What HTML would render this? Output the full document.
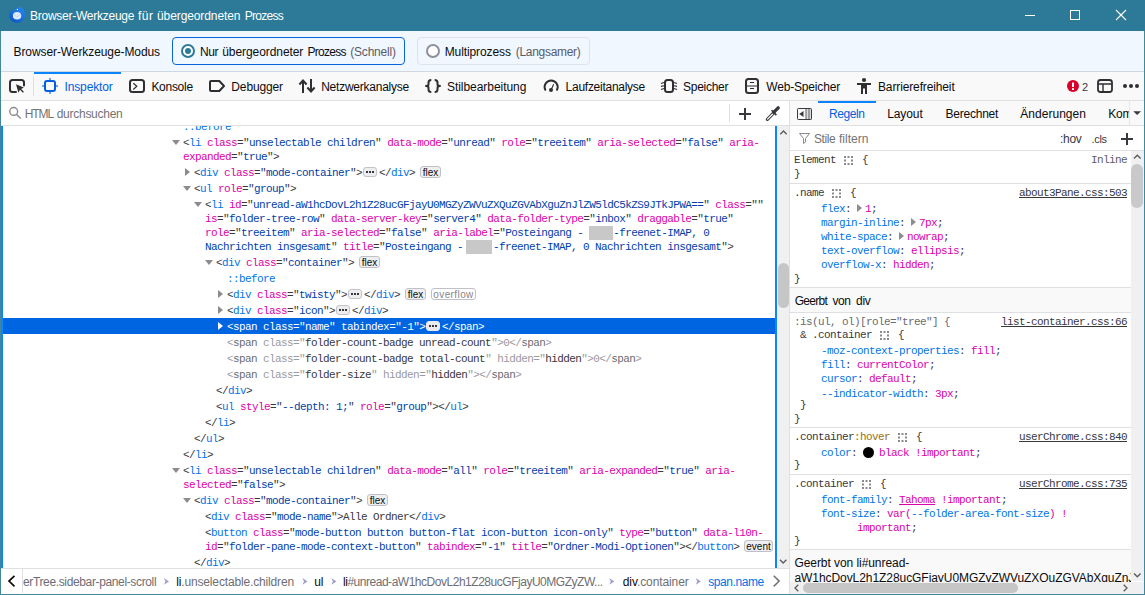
<!DOCTYPE html>
<html lang="de">
<head>
<meta charset="utf-8">
<title>Browser-Werkzeuge für übergeordneten Prozess</title>
<style>
html,body{margin:0;padding:0;}
body{width:1145px;height:595px;overflow:hidden;background:#fff;font-family:"Liberation Sans",sans-serif;font-size:12px;color:#0c0c0d;position:relative;}
#win{position:absolute;left:0;top:0;width:1145px;height:595px;overflow:hidden;}
.abs{position:absolute;}
.t{position:absolute;white-space:pre;line-height:16px;font-family:"Liberation Sans",sans-serif;}
.m{position:absolute;white-space:pre;font-family:"Liberation Mono",monospace;font-size:11px;letter-spacing:-0.6px;line-height:14px;color:#38383d;}
.tg{color:#0074e8}
.an{color:#dd00a9}
.av{color:#003eaa}
.ps{color:#0074e8}
.hid, .hid .an{color:#9a9a9e}
.hid .tg{color:#6c6c70}
.hid .av{color:#38383d}
.sel, .sel .tg, .sel .an, .sel .av{color:#fff}
.pn{color:#0074e8}
.pv{color:#dd00a9}
.lnk{color:#38383d;text-decoration:underline;}
.badge{position:absolute;height:10px;border:1px solid #c0c0c8;border-radius:3px;background:#efeff2;color:#0c0c0d;font-family:"Liberation Sans",sans-serif;font-size:10px;line-height:11.5px;text-align:center;white-space:pre;}
.tw{position:absolute;width:0;height:0;}
.tw.c{border-left:5px solid #8c8c90;border-top:4px solid transparent;border-bottom:4px solid transparent;}
.tw.e{border-top:5px solid #8c8c90;border-left:4px solid transparent;border-right:4px solid transparent;}
.tw.c.s{border-left-color:#fff}
.tw.e.s{border-top-color:#fff}
.rd{display:inline-block;height:14px;background:#c8c8c8;vertical-align:top;}
.eb{position:absolute;width:11.5px;height:8px;border:1px solid #c3c3c9;border-radius:3px;background:#ededf0;}
.eb.s{background:#e9e9ee;border-color:#e9e9ee}
.eb i{position:absolute;top:3px;width:2px;height:2px;background:#38383d;}
.eb i:nth-child(1){left:2px}.eb i:nth-child(2){left:5px}.eb i:nth-child(3){left:8px}
.badge.off{background:#fff;color:#85858c;letter-spacing:0.4px;}
.inl{color:#5c5c63}
.anc{color:#6a6a70}
.pc{color:#967014}
.pv .pn{color:#0074e8}
.hl{position:absolute;left:0;width:1145px;height:1px;background:#e0e0e2;}
svg{position:absolute;overflow:visible;}
</style>
</head>
<body>
<div id="win">

<!-- title bar -->
<div class="abs" style="left:0;top:0;width:1145px;height:31px;background:#2c7a98;"></div>
<!-- window controls -->
<div class="abs" style="left:1025px;top:15px;width:10px;height:1px;background:#fff;"></div>
<div class="abs" style="left:1070px;top:10px;width:8px;height:8px;border:1px solid #fff;"></div>
<svg style="left:1116px;top:10px" width="10" height="10" viewBox="0 0 10 10"><path d="M0 0L10 10M10 0L0 10" stroke="#fff" stroke-width="1.1" fill="none"/></svg>
<!-- app icon -->
<svg style="left:0;top:0" width="40" height="31" viewBox="0 0 40 31">
<defs><linearGradient id="tbg" x1="0.85" y1="0.05" x2="0.2" y2="0.95"><stop offset="0" stop-color="#2483ee"/><stop offset="0.55" stop-color="#176ddc"/><stop offset="1" stop-color="#0f55c4"/></linearGradient></defs>
<path d="M12.400 9.200C10.500 11 9 13.500 9.300 16.200C9.800 20 13 22.800 17 22.800C21.500 22.800 25 19.500 25 15C25 11.500 23.600 8.600 20.600 7.300C18.400 7.200 16 8 14.600 10C13.900 11 13.400 12 13.300 13.200C12.600 12 12.300 10.500 12.400 9.200Z" fill="url(#tbg)"/>
<ellipse cx="17.100" cy="15.800" rx="4.200" ry="3.800" fill="#dcebfb"/>
<path d="M13.400 14.200L17.100 17L20.800 14.200" stroke="#b7d0ee" stroke-width="0.800" fill="none"/>
<circle cx="17.400" cy="9.500" r="0.650" fill="#fff"/>
</svg>
<!-- mode bar -->
<div class="abs" style="left:1px;top:31px;width:1143px;height:40px;background:#f0f7ff;"></div>
<div class="abs" style="left:1px;top:71px;width:1143px;height:1px;background:#cfd8e0;"></div>
<div class="abs" style="left:172px;top:37px;width:231px;height:26px;border:1px solid #0a62e0;border-radius:4px;"></div>
<div class="abs" style="left:417px;top:37px;width:171px;height:26px;border:1px solid #dde3e9;border-radius:4px;"></div>
<!-- radios -->
<div class="abs" style="left:181px;top:44px;width:10px;height:10px;border:2px solid #2c7a98;border-radius:50%;background:#fff;"></div>
<div class="abs" style="left:185px;top:48px;width:6px;height:6px;border-radius:50%;background:#2c7a98;"></div>
<div class="abs" style="left:426px;top:44px;width:10px;height:10px;border:2px solid #8f8f9d;border-radius:50%;background:#fff;"></div>
<!-- toolbar -->
<div class="abs" style="left:1px;top:72px;width:1143px;height:28px;background:#f9f9fa;"></div>
<div class="abs" style="left:1px;top:100px;width:1143px;height:1px;background:#e0e0e2;"></div>
<div class="abs" style="left:34px;top:72px;width:87px;height:2px;background:#0a84ff;"></div>
<div class="abs" style="left:33px;top:76px;width:1px;height:20px;background:#e0e0e2;"></div>
<!-- search bar / sidebar tabs row -->
<div class="abs" style="left:1px;top:101px;width:788px;height:24px;background:#fff;"></div>
<div class="abs" style="left:790px;top:101px;width:354px;height:24px;background:#f9f9fa;"></div>
<div class="abs" style="left:1px;top:125px;width:1143px;height:1px;background:#e0e0e2;"></div>
<div class="abs" style="left:729px;top:104px;width:1px;height:18px;background:#e0e0e2;"></div>
<div class="abs" style="left:818px;top:101px;width:58px;height:2px;background:#0a84ff;"></div>
<!-- splitter -->
<div class="abs" style="left:789px;top:101px;width:1px;height:493px;background:#e0e0e2;"></div>
<!-- markup bg -->
<div class="abs" style="left:1px;top:126px;width:776px;height:442px;background:#fff;"></div>
<!-- markup scrollbar -->
<div class="abs" style="left:777px;top:126px;width:12px;height:442px;background:#f0f0f0;"></div>
<div class="abs" style="left:778px;top:263px;width:11px;height:45px;border-radius:5.5px;background:#c6c6c6;"></div>
<!-- breadcrumbs -->
<div class="abs" style="left:1px;top:568px;width:788px;height:1px;background:#e0e0e2;"></div>
<div class="abs" style="left:1px;top:569px;width:788px;height:25px;background:#fff;"></div>
<div class="abs" style="left:22px;top:569px;width:1px;height:24px;background:#e0e0e2;"></div>
<!-- right: filter bar -->
<div class="abs" style="left:790px;top:126px;width:354px;height:24px;background:#fff;"></div>
<div class="abs" style="left:790px;top:150px;width:354px;height:1px;background:#e0e0e2;"></div>
<!-- right scrollbar -->
<div class="abs" style="left:1131px;top:151px;width:13px;height:430px;background:#f0f0f0;"></div>
<div class="abs" style="left:1131px;top:164px;width:12px;height:44px;border-radius:6px;background:#c9c9c9;"></div>

<!-- icons -->
<svg style="left:0;top:0" width="1145" height="595" viewBox="0 0 1145 595" fill="none" stroke-linecap="butt">
<g stroke="#2f2f33" stroke-width="2" stroke-linejoin="round">
<!-- pick element -->
<path d="M16 92H12.5Q10 92 10 89.500V82.500Q10 80 12.500 80H21.500Q24 80 24 82.500V85.500" stroke-linecap="round"/>
<path d="M16 84.200L18.400 92.800L20 89.800L22.900 92.800L23.900 91.800L21.200 88.900L23.800 87.600Z" fill="#2f2f33" stroke="none"/>
<!-- console -->
<rect x="130" y="80" width="14" height="12" rx="2.500"/>
<path d="M133.300 83.300L136.800 86.300L133.300 89.500" stroke-width="1.200"/>
<!-- debugger -->
<path d="M210 82Q210 81 211 81H219.300L224 86L219.300 91H211Q210 91 210 90Z"/>
<!-- network -->
<path d="M303 93V80.500M299.400 84.500L303 80.500L306.600 84.500M311 79V91.500M307.400 87.500L311 91.500L314.600 87.500" stroke-linejoin="miter"/>
<!-- style editor -->
<path d="M431.300 80Q428.500 80 428.500 82.500V84.300Q428.500 86 426 86Q428.500 86 428.500 87.700V89.500Q428.500 92 431.300 92M434.700 80Q437.500 80 437.500 82.500V84.300Q437.500 86 440 86Q437.500 86 437.500 87.700V89.500Q437.500 92 434.700 92"/>
<!-- performance -->
<path d="M545.300 89.800A6.500 6.500 0 1 1 557 89.800" stroke-linecap="round"/>
<circle cx="551" cy="90" r="2" fill="#2f2f33" stroke="none"/>
<path d="M551 90L553.700 84.200" stroke-width="1.100"/>
<!-- memory -->
<rect x="665" y="80" width="8" height="12" rx="2.500"/>
<path d="M661 83.600L664 82.600M661 86.400L664 85.800M661 89.600L664 88.600M677 83.600L674 82.600M677 86.400L674 85.800M677 89.600L674 88.600" stroke-width="1.100"/>
<!-- storage -->
<rect x="746" y="79" width="12" height="14" rx="2.500"/>
<path d="M746 86H758M750 82.500H754M750 88.500H754" stroke-width="1.100"/>
<!-- dock -->
<rect x="1098" y="80" width="14" height="12" rx="2.500" stroke-width="1.800"/>
<path d="M1098 84H1112M1103 84V92" stroke-width="1.400"/>
</g>
<!-- accessibility -->
<g fill="#2f2f33">
<circle cx="864" cy="80" r="2.100"/>
<path d="M857 83H871V85H867V94H865V88.500H863V94H861V85H857Z"/>
<!-- meatball -->
<circle cx="1125" cy="86" r="2"/><circle cx="1131" cy="86" r="2"/><circle cx="1137" cy="86" r="2"/>
</g>
<!-- inspector (active) -->
<rect x="45" y="81" width="10" height="10" rx="2" stroke="#0060df" stroke-width="2"/>
<path d="M50 78V80M50 92V94M42 86H44M56 86H58" stroke="#0060df" stroke-opacity="0.550" stroke-width="2"/>
<!-- error badge -->
<circle cx="1073" cy="86" r="6" fill="#d7002b"/>
<rect x="1072" y="82.500" width="2" height="4.500" rx="0.600" fill="#fff"/>
<rect x="1072" y="88" width="2" height="2" rx="0.600" fill="#fff"/>
<!-- search magnifier -->
<circle cx="13.700" cy="111.400" r="3.900" stroke="#8a8a8f" stroke-width="1.400"/>
<path d="M16.500 114.500L20.800 118.600" stroke="#8a8a8f" stroke-width="1.400"/>
<!-- plus (new node) -->
<path d="M739 114H751M745 108V120" stroke="#38383d" stroke-width="2"/>
<!-- eyedropper -->
<path d="M767.400 119.300L774 112.700" stroke="#38383d" stroke-width="3.200" stroke-linecap="round"/>
<path d="M767.600 119.100L774.200 112.500" stroke="#fff" stroke-width="1.300" stroke-linecap="round"/>
<path d="M773.600 112.400L778.200 107.900" stroke="#38383d" stroke-width="3.400" stroke-linecap="round"/>
<path d="M771.600 110.300L776.400 115.100" stroke="#38383d" stroke-width="1.600"/>
<!-- sidebar toggle -->
<rect x="806" y="109" width="6" height="11" fill="#dedee2"/>
<rect x="797.500" y="108.500" width="14" height="11" rx="0.800" stroke="#38383d" stroke-width="1"/>
<path d="M806 108.500V119.500M809 108.500V119.500" stroke="#38383d" stroke-width="0.800"/>
<path d="M803.500 111V117L799.200 114Z" fill="#38383d"/>
<!-- sidebar tabs dropdown arrow -->
<path d="M1133.300 111.300H1141L1137.150 115Z" fill="#38383d"/>
<!-- filter funnel -->
<path d="M799.500 133.500H809.500L805.500 138.500V142L803.500 143.500V138.500Z" stroke="#8a8a8f" stroke-width="1" stroke-linejoin="round"/>
<!-- add rule plus -->
<path d="M1121 139H1133M1127 133V145" stroke="#38383d" stroke-width="2"/>
<!-- markup scrollbar arrows -->
<path d="M780.300 134.200L783.500 131L786.700 134.200" stroke="#5a5a5a" stroke-width="1.300"/>
<path d="M780 559.800L783.200 563L786.400 559.800" stroke="#5a5a5a" stroke-width="1.300"/>
<!-- rule view scrollbar arrows -->
<path d="M1134 158.500L1137.300 155.200L1140.600 158.500" stroke="#5a5a5a" stroke-width="1.300"/>
<path d="M1134 573.500L1137.300 576.800L1140.600 573.500" stroke="#5a5a5a" stroke-width="1.300"/>
<!-- breadcrumb arrows -->
<path d="M14.500 575.800L9 581.100L14.500 586.400" stroke="#0c0c0d" stroke-width="1.700"/>
<path d="M773.700 575.800L779.200 581.100L773.700 586.400" stroke="#737373" stroke-width="1.500"/>
<g fill="#9d9dcb">
<path d="M163.9 578L169 581.400L163.9 584.800L165.5 581.400Z"/>
<path d="M302.4 578L307.5 581.400L302.4 584.800L304 581.400Z"/>
<path d="M331.3 578L336.4 581.400L331.3 584.800L332.9 581.400Z"/>
<path d="M609.2 578L614.3 581.400L609.2 584.800L610.8 581.400Z"/>
<path d="M695.7 578L700.8 581.400L695.7 584.800L697.3 581.400Z"/>
</g>
</svg>

<!-- markup view -->
<div class="abs" style="left:0;top:126px;width:775px;height:442px;overflow:hidden">
<div class="abs" style="left:3px;top:192px;width:772px;height:16px;background:#0065e0"></div>
<div class="m ps" style="left:183px;top:-6px">::before</div>
<div class="tw e" style="left:172px;top:14px"></div>
<div class="m " style="left:183px;top:10px">&lt;<span class="tg">li</span> <span class="an">class</span>="<span class="av">unselectable children</span>" <span class="an">data-mode</span>="<span class="av">unread</span>" <span class="an">role</span>="<span class="av">treeitem</span>" <span class="an">aria-selected</span>="<span class="av">false</span>" <span class="an">aria-</span></div>
<div class="m " style="left:183px;top:24px"><span class="an">expanded</span>="<span class="av">true</span>"&gt;</div>
<div class="tw c" style="left:185px;top:42px"></div>
<div class="m " style="left:194px;top:40px">&lt;<span class="tg">div</span> <span class="an">class</span>="<span class="av">mode-container</span>"&gt;</div>
<div class="eb" style="left:363px;top:41px"><i></i><i></i><i></i></div>
<div class="m " style="left:379px;top:40px">&lt;/<span class="tg">div</span>&gt;</div>
<div class="badge " style="left:420px;top:40px;width:19px">flex</div>
<div class="tw e" style="left:183px;top:60px"></div>
<div class="m " style="left:194px;top:56px">&lt;<span class="tg">ul</span> <span class="an">role</span>="<span class="av">group</span>"&gt;</div>
<div class="tw e" style="left:194px;top:76px"></div>
<div class="m " style="left:205px;top:72px">&lt;<span class="tg">li</span> <span class="an">id</span>="<span class="av">unread-aW1hcDovL2h1Z28ucGFjayU0MGZyZWVuZXQuZGVAbXguZnJlZW5ldC5kZS9JTkJPWA==</span>" <span class="an">class</span>=""</div>
<div class="m " style="left:205px;top:86px"><span class="an">is</span>="<span class="av">folder-tree-row</span>" <span class="an">data-server-key</span>="<span class="av">server4</span>" <span class="an">data-folder-type</span>="<span class="av">inbox</span>" <span class="an">draggable</span>="<span class="av">true</span>"</div>
<div class="m " style="left:205px;top:100px"><span class="an">role</span>="<span class="av">treeitem</span>" <span class="an">aria-selected</span>="<span class="av">false</span>" <span class="an">aria-label</span>="<span class="av">Posteingang - </span><span class="rd">    </span><span class="av">-freenet-IMAP, 0</span></div>
<div class="m " style="left:205px;top:114px"><span class="av">Nachrichten insgesamt</span>" <span class="an">title</span>="<span class="av">Posteingang - </span><span class="rd" style="margin-left:-3px;width:26px;margin-right:1px">    </span><span class="av">-freenet-IMAP, 0 Nachrichten insgesamt</span>"&gt;</div>
<div class="tw e" style="left:205px;top:134px"></div>
<div class="m " style="left:216px;top:130px">&lt;<span class="tg">div</span> <span class="an">class</span>="<span class="av">container</span>"&gt;</div>
<div class="badge " style="left:359px;top:130px;width:19px">flex</div>
<div class="m ps" style="left:227px;top:146px">::before</div>
<div class="tw c" style="left:218px;top:164px"></div>
<div class="m " style="left:227px;top:162px">&lt;<span class="tg">div</span> <span class="an">class</span>="<span class="av">twisty</span>"&gt;</div>
<div class="eb" style="left:348px;top:163px"><i></i><i></i><i></i></div>
<div class="m " style="left:364px;top:162px">&lt;/<span class="tg">div</span>&gt;</div>
<div class="badge " style="left:405px;top:162px;width:19px">flex</div>
<div class="badge off" style="left:431px;top:162px;width:43px">overflow</div>
<div class="tw c" style="left:218px;top:180px"></div>
<div class="m " style="left:227px;top:178px">&lt;<span class="tg">div</span> <span class="an">class</span>="<span class="av">icon</span>"&gt;</div>
<div class="eb" style="left:336px;top:179px"><i></i><i></i><i></i></div>
<div class="m " style="left:352px;top:178px">&lt;/<span class="tg">div</span>&gt;</div>
<div class="tw c s" style="left:218px;top:196px"></div>
<div class="m sel" style="left:227px;top:194px">&lt;<span class="tg">span</span> <span class="an">class</span>="<span class="av">name</span>" <span class="an">tabindex</span>="<span class="av">-1</span>"&gt;</div>
<div class="eb s" style="left:426px;top:195px"><i></i><i></i><i></i></div>
<div class="m sel" style="left:442px;top:194px">&lt;/<span class="tg">span</span>&gt;</div>
<div class="m hid" style="left:227px;top:210px">&lt;<span class="tg">span</span> <span class="an">class</span>="<span class="av">folder-count-badge unread-count</span>"&gt;0&lt;/<span class="tg">span</span>&gt;</div>
<div class="m hid" style="left:227px;top:226px">&lt;<span class="tg">span</span> <span class="an">class</span>="<span class="av">folder-count-badge total-count</span>" <span class="an">hidden</span>="<span class="av">hidden</span>"&gt;0&lt;/<span class="tg">span</span>&gt;</div>
<div class="m hid" style="left:227px;top:242px">&lt;<span class="tg">span</span> <span class="an">class</span>="<span class="av">folder-size</span>" <span class="an">hidden</span>="<span class="av">hidden</span>"&gt;&lt;/<span class="tg">span</span>&gt;</div>
<div class="m " style="left:216px;top:258px">&lt;/<span class="tg">div</span>&gt;</div>
<div class="m " style="left:216px;top:274px">&lt;<span class="tg">ul</span> <span class="an">style</span>="<span class="av">--depth: 1;</span>" <span class="an">role</span>="<span class="av">group</span>"&gt;&lt;/<span class="tg">ul</span>&gt;</div>
<div class="m " style="left:205px;top:290px">&lt;/<span class="tg">li</span>&gt;</div>
<div class="m " style="left:194px;top:306px">&lt;/<span class="tg">ul</span>&gt;</div>
<div class="m " style="left:183px;top:322px">&lt;/<span class="tg">li</span>&gt;</div>
<div class="tw e" style="left:172px;top:342px"></div>
<div class="m " style="left:183px;top:338px">&lt;<span class="tg">li</span> <span class="an">class</span>="<span class="av">unselectable children</span>" <span class="an">data-mode</span>="<span class="av">all</span>" <span class="an">role</span>="<span class="av">treeitem</span>" <span class="an">aria-expanded</span>="<span class="av">true</span>" <span class="an">aria-</span></div>
<div class="m " style="left:183px;top:352px"><span class="an">selected</span>="<span class="av">false</span>"&gt;</div>
<div class="tw e" style="left:183px;top:372px"></div>
<div class="m " style="left:194px;top:368px">&lt;<span class="tg">div</span> <span class="an">class</span>="<span class="av">mode-container</span>"&gt;</div>
<div class="badge " style="left:367px;top:368px;width:19px">flex</div>
<div class="m " style="left:205px;top:384px">&lt;<span class="tg">div</span> <span class="an">class</span>="<span class="av">mode-name</span>"&gt;Alle Ordner&lt;/<span class="tg">div</span>&gt;</div>
<div class="m " style="left:205px;top:400px">&lt;<span class="tg">button</span> <span class="an">class</span>="<span class="av">mode-button button button-flat icon-button icon-only</span>" <span class="an">type</span>="<span class="av">button</span>" <span class="an">data-l10n-</span></div>
<div class="m " style="left:205px;top:414px"><span class="an">id</span>="<span class="av">folder-pane-mode-context-button</span>" <span class="an">tabindex</span>="<span class="av">-1</span>" <span class="an">title</span>="<span class="av">Ordner-Modi-Optionen</span>"&gt;&lt;/<span class="tg">button</span>&gt;</div>
<div class="badge " style="left:744px;top:414px;width:27px">event</div>
<div class="m " style="left:194px;top:430px">&lt;/<span class="tg">div</span>&gt;</div>
</div>
<!-- focus outline -->
<div class="abs" style="left:1px;top:126px;width:2px;height:442px;background:#0a84ff"></div>
<div class="abs" style="left:775px;top:126px;width:2px;height:442px;background:#0a84ff"></div>

<!-- rule view -->
<div class="abs" style="left:790px;top:151px;width:341px;height:431px;background:#fff"></div>
<div class="m " style="left:794px;top:153px">Element </div>
<svg style="left:844px;top:156px" width="9" height="9" viewBox="0 0 9 9" fill="#8a8a8f"><rect x="0" y="0" width="2" height="2"/><rect x="0" y="3.5" width="2" height="2"/><rect x="0" y="7" width="2" height="2"/><rect x="3.5" y="0" width="2" height="2"/><rect x="3.5" y="7" width="2" height="2"/><rect x="7" y="0" width="2" height="2"/><rect x="7" y="3.5" width="2" height="2"/><rect x="7" y="7" width="2" height="2"/></svg>
<div class="m " style="left:862px;top:153px">{</div>
<div class="m inl" style="left:1091px;top:153px">Inline</div>
<div class="m " style="left:794px;top:167px">}</div>
<div class="abs" style="left:790px;top:183px;width:341px;height:1px;background:#e0e0e2"></div>
<div class="m " style="left:794px;top:186px">.name </div>
<svg style="left:832px;top:189px" width="9" height="9" viewBox="0 0 9 9" fill="#8a8a8f"><rect x="0" y="0" width="2" height="2"/><rect x="0" y="3.5" width="2" height="2"/><rect x="0" y="7" width="2" height="2"/><rect x="3.5" y="0" width="2" height="2"/><rect x="3.5" y="7" width="2" height="2"/><rect x="7" y="0" width="2" height="2"/><rect x="7" y="3.5" width="2" height="2"/><rect x="7" y="7" width="2" height="2"/></svg>
<div class="m " style="left:850px;top:186px">{</div>
<div class="m lnk" style="left:1019px;top:186px">about3Pane.css:503</div>
<div class="m " style="left:821px;top:201.6px"><span class="pn">flex</span>: </div>
<div class="tw c" style="left:857px;top:203.6px;border-left-color:#8c8c90"></div>
<div class="m " style="left:865px;top:201.6px"><span class="pv">1</span>;</div>
<div class="m " style="left:821px;top:215.8px"><span class="pn">margin-inline</span>: </div>
<div class="tw c" style="left:911px;top:217.8px;border-left-color:#8c8c90"></div>
<div class="m " style="left:919px;top:215.8px"><span class="pv">7px</span>;</div>
<div class="m " style="left:821px;top:230px"><span class="pn">white-space</span>: </div>
<div class="tw c" style="left:899px;top:232px;border-left-color:#8c8c90"></div>
<div class="m " style="left:907px;top:230px"><span class="pv">nowrap</span>;</div>
<div class="m " style="left:821px;top:244.2px"><span class="pn">text-overflow</span>: <span class="pv">ellipsis</span>;</div>
<div class="m " style="left:821px;top:258.4px"><span class="pn">overflow-x</span>: <span class="pv">hidden</span>;</div>
<div class="m " style="left:794px;top:272px">}</div>
<div class="abs" style="left:790px;top:287px;width:341px;height:1px;background:#e0e0e2"></div>
<div class="abs" style="left:790px;top:288px;width:341px;height:24px;background:#f9f9fa"></div>
<div class="abs" style="left:790px;top:312px;width:341px;height:1px;background:#e0e0e2"></div>
<div class="m anc" style="left:794px;top:315px">:is(ul, ol)[role="tree"] {</div>
<div class="m lnk" style="left:1001px;top:315px">list-container.css:66</div>
<div class="m " style="left:794px;top:328px"> &amp; .container </div>
<svg style="left:880px;top:331px" width="9" height="9" viewBox="0 0 9 9" fill="#8a8a8f"><rect x="0" y="0" width="2" height="2"/><rect x="0" y="3.5" width="2" height="2"/><rect x="0" y="7" width="2" height="2"/><rect x="3.5" y="0" width="2" height="2"/><rect x="3.5" y="7" width="2" height="2"/><rect x="7" y="0" width="2" height="2"/><rect x="7" y="3.5" width="2" height="2"/><rect x="7" y="7" width="2" height="2"/></svg>
<div class="m " style="left:898px;top:328px">{</div>
<div class="m " style="left:821px;top:344px"><span class="pn">-moz-context-properties</span>: <span class="pv">fill</span>;</div>
<div class="m " style="left:821px;top:358.2px"><span class="pn">fill</span>: <span class="pv">currentColor</span>;</div>
<div class="m " style="left:821px;top:372.4px"><span class="pn">cursor</span>: <span class="pv">default</span>;</div>
<div class="m " style="left:821px;top:386.6px"><span class="pn">--indicator-width</span>: <span class="pv">3px</span>;</div>
<div class="m " style="left:794px;top:398px"> }</div>
<div class="m " style="left:794px;top:412px">}</div>
<div class="abs" style="left:790px;top:427px;width:341px;height:1px;background:#e0e0e2"></div>
<div class="m " style="left:794px;top:430px">.container<span class="pc">:hover</span> </div>
<svg style="left:898px;top:433px" width="9" height="9" viewBox="0 0 9 9" fill="#8a8a8f"><rect x="0" y="0" width="2" height="2"/><rect x="0" y="3.5" width="2" height="2"/><rect x="0" y="7" width="2" height="2"/><rect x="3.5" y="0" width="2" height="2"/><rect x="3.5" y="7" width="2" height="2"/><rect x="7" y="0" width="2" height="2"/><rect x="7" y="3.5" width="2" height="2"/><rect x="7" y="7" width="2" height="2"/></svg>
<div class="m " style="left:916px;top:430px">{</div>
<div class="m lnk" style="left:1019px;top:430px">userChrome.css:840</div>
<div class="m " style="left:821px;top:445.8px"><span class="pn">color</span>: </div>
<div class="abs" style="left:863px;top:447px;width:11px;height:11px;border-radius:50%;background:#000"></div>
<div class="m " style="left:879px;top:445.8px"><span class="pv">black !important</span>;</div>
<div class="m " style="left:794px;top:458px">}</div>
<div class="abs" style="left:790px;top:474px;width:341px;height:1px;background:#e0e0e2"></div>
<div class="m " style="left:794px;top:477px">.container </div>
<svg style="left:862px;top:480px" width="9" height="9" viewBox="0 0 9 9" fill="#8a8a8f"><rect x="0" y="0" width="2" height="2"/><rect x="0" y="3.5" width="2" height="2"/><rect x="0" y="7" width="2" height="2"/><rect x="3.5" y="0" width="2" height="2"/><rect x="3.5" y="7" width="2" height="2"/><rect x="7" y="0" width="2" height="2"/><rect x="7" y="3.5" width="2" height="2"/><rect x="7" y="7" width="2" height="2"/></svg>
<div class="m " style="left:880px;top:477px">{</div>
<div class="m lnk" style="left:1019px;top:477px">userChrome.css:735</div>
<div class="m " style="left:821px;top:493px"><span class="pn">font-family</span>: <span class="pv"><u>Tahoma</u> !important</span>;</div>
<div class="m " style="left:821px;top:507px"><span class="pn">font-size</span>: <span class="pv">var(<span class="pn">--folder-area-font-size</span>) !</span></div>
<div class="m " style="left:857px;top:520.6px"><span class="pv">important</span>;</div>
<div class="m " style="left:794px;top:534px">}</div>
<div class="abs" style="left:790px;top:549px;width:341px;height:1px;background:#e0e0e2"></div>
<div class="abs" style="left:790px;top:550px;width:341px;height:32px;background:#f9f9fa"></div>

<!-- ui text -->
<span class="t" style="left:30px;top:7.73px;font-size:12px;color:#fff;letter-spacing:-0.252px;">Browser-Werkzeuge</span>
<span class="t" style="left:138px;top:7.73px;font-size:12px;color:#fff;letter-spacing:0.495px;">für</span>
<span class="t" style="left:157px;top:7.73px;font-size:12px;color:#fff;letter-spacing:-0.096px;">übergeordneten</span>
<span class="t" style="left:244.8px;top:7.73px;font-size:12px;color:#fff;letter-spacing:-0.737px;">Prozess</span>
<span class="t" style="left:13.5px;top:44.03px;font-size:12px;color:#0c0c0d;letter-spacing:-0.087px;">Browser-Werkzeuge-Modus</span>
<span class="t" style="left:199.9px;top:44.03px;font-size:12px;color:#0c0c0d;letter-spacing:-0.415px;">Nur</span>
<span class="t" style="left:222.2px;top:44.03px;font-size:12px;color:#0c0c0d;letter-spacing:-0.069px;">übergeordneter</span>
<span class="t" style="left:307.5px;top:44.03px;font-size:12px;color:#0c0c0d;letter-spacing:-0.708px;">Prozess</span>
<span class="t" style="left:350.3px;top:44.03px;font-size:12px;color:#5b5b66;letter-spacing:-0.218px;">(Schnell)</span>
<span class="t" style="left:444.7px;top:44.03px;font-size:12px;color:#0c0c0d;letter-spacing:-0.105px;">Multiprozess</span>
<span class="t" style="left:515.8px;top:44.03px;font-size:12px;color:#5b5b66;letter-spacing:-0.303px;">(Langsamer)</span>
<span class="t" style="left:64.5px;top:79.03px;font-size:12px;color:#0060df;letter-spacing:-0.129px;">Inspektor</span>
<span class="t" style="left:151.4px;top:79.03px;font-size:12px;color:#0c0c0d;letter-spacing:-0.282px;">Konsole</span>
<span class="t" style="left:231.3px;top:79.03px;font-size:12px;color:#0c0c0d;letter-spacing:-0.127px;">Debugger</span>
<span class="t" style="left:321.2px;top:79.03px;font-size:12px;color:#0c0c0d;letter-spacing:-0.238px;">Netzwerkanalyse</span>
<span class="t" style="left:447px;top:79.03px;font-size:12px;color:#0c0c0d;letter-spacing:-0.051px;">Stilbearbeitung</span>
<span class="t" style="left:565.6px;top:79.03px;font-size:12px;color:#0c0c0d;letter-spacing:-0.266px;">Laufzeitanalyse</span>
<span class="t" style="left:683px;top:79.03px;font-size:12px;color:#0c0c0d;letter-spacing:-0.272px;">Speicher</span>
<span class="t" style="left:766.2px;top:79.03px;font-size:12px;color:#0c0c0d;letter-spacing:-0.169px;">Web-Speicher</span>
<span class="t" style="left:878px;top:79.03px;font-size:12px;color:#0c0c0d;letter-spacing:-0.131px;">Barrierefreiheit</span>
<span class="t" style="left:1082px;top:79.36px;font-size:11px;color:#38383d;letter-spacing:-0.625px;">2</span>
<span class="t" style="left:24.7px;top:106.03px;font-size:12px;color:#737373;letter-spacing:-1.093px;">HTML</span>
<span class="t" style="left:56.7px;top:106.03px;font-size:12px;color:#737373;letter-spacing:-0.265px;">durchsuchen</span>
<span class="t" style="left:829px;top:106.03px;font-size:12px;color:#0060df;letter-spacing:-0.405px;">Regeln</span>
<span class="t" style="left:887.2px;top:106.03px;font-size:12px;color:#0c0c0d;letter-spacing:-0.089px;">Layout</span>
<span class="t" style="left:945.4px;top:106.03px;font-size:12px;color:#0c0c0d;letter-spacing:-0.211px;">Berechnet</span>
<span class="t" style="left:1020.2px;top:106.03px;font-size:12px;color:#0c0c0d;letter-spacing:0.041px;">Änderungen</span>
<span class="t" style="left:814px;top:131.03px;font-size:12px;color:#737373;letter-spacing:-0.409px;">Stile</span>
<span class="t" style="left:839px;top:131.03px;font-size:12px;color:#737373;letter-spacing:-0.006px;">filtern</span>
<span class="t" style="left:1060px;top:131.03px;font-size:12px;color:#38383d;letter-spacing:-0.297px;">:hov</span>
<span class="t" style="left:1091.6px;top:131.36px;font-size:11px;color:#38383d;letter-spacing:-0.350px;">.cls</span>
<span class="t" style="left:794.7px;top:293.03px;font-size:12px;color:#0c0c0d;letter-spacing:-0.698px;">Geerbt</span>
<span class="t" style="left:832.4px;top:293.03px;font-size:12px;color:#0c0c0d;letter-spacing:-0.353px;">von</span>
<span class="t" style="left:855.9px;top:293.03px;font-size:12px;color:#0c0c0d;letter-spacing:-0.181px;">div</span>
<span class="t" style="left:23px;top:574.03px;font-size:12px;color:#6e6e73;letter-spacing:-0.361px;">erTree.sidebar-panel-scroll</span>
<span class="t" style="left:176.2px;top:574.03px;font-size:12px;color:#6e6e73;letter-spacing:-0.150px;"><span style="color:#0c0c0d">li</span>.unselectable.children</span>
<span class="t" style="left:314.2px;top:574.03px;font-size:12px;color:#0c0c0d;letter-spacing:-0.072px;">ul</span>
<span class="t" style="left:343px;top:574.03px;font-size:12px;color:#6e6e73;letter-spacing:-0.475px;"><span style="color:#0c0c0d">li</span>#unread-aW1hcDovL2h1Z28ucGFjayU0MGZyZW...</span>
<span class="t" style="left:622.8px;top:574.03px;font-size:12px;color:#6e6e73;letter-spacing:-0.104px;"><span style="color:#0c0c0d">div</span>.container</span>
<span class="t" style="left:708.2px;top:574.03px;font-size:12px;color:#0074e8;letter-spacing:-0.419px;">span.name</span>
<span class="t" style="left:794.4px;top:555.03px;font-size:12px;color:#0c0c0d;letter-spacing:-0.061px;">Geerbt von li#unread-</span>
<div class="abs" style="left:790px;top:569px;width:341px;height:13px;overflow:hidden"><span class="t" style="left:4.4px;top:1.03px;letter-spacing:-0.061px">aW1hcDovL2h1Z28ucGFjayU0MGZyZWVuZXQuZGVAbXguZnJlZW5ldC5kZS9JTkJPWA==</span></div>
<div class="abs" style="left:1100px;top:101px;width:29px;height:24px;overflow:hidden;border-right:1px solid #e6e6e8"><span class="t" style="left:8.3px;top:5.03px;letter-spacing:-0.2px">Kompatibilität</span></div>
<!-- rules -->
<!-- rule view horizontal scrollbar -->
<div class="abs" style="left:790px;top:582px;width:354px;height:12px;background:#f0f0f0;"></div>
<div class="abs" style="left:803px;top:582.5px;width:215px;height:10.500px;border-radius:5.250px;background:#c6c6c6;"></div>
<svg style="left:0;top:0" width="1145" height="595" viewBox="0 0 1145 595" fill="none"><path d="M798.300 584.800L795 588L798.300 591.200M1123.700 584.800L1127 588L1123.700 591.200" stroke="#5a5a5a" stroke-width="1.300"/></svg>
<!-- window borders (on top) -->
<div class="abs" style="left:0;top:31px;width:1px;height:564px;background:#43879c;"></div>
<div class="abs" style="left:1144px;top:31px;width:1px;height:564px;background:#43879c;"></div>
<div class="abs" style="left:0;top:594px;width:1145px;height:1px;background:#43879c;"></div>

</div>
</body>
</html>
